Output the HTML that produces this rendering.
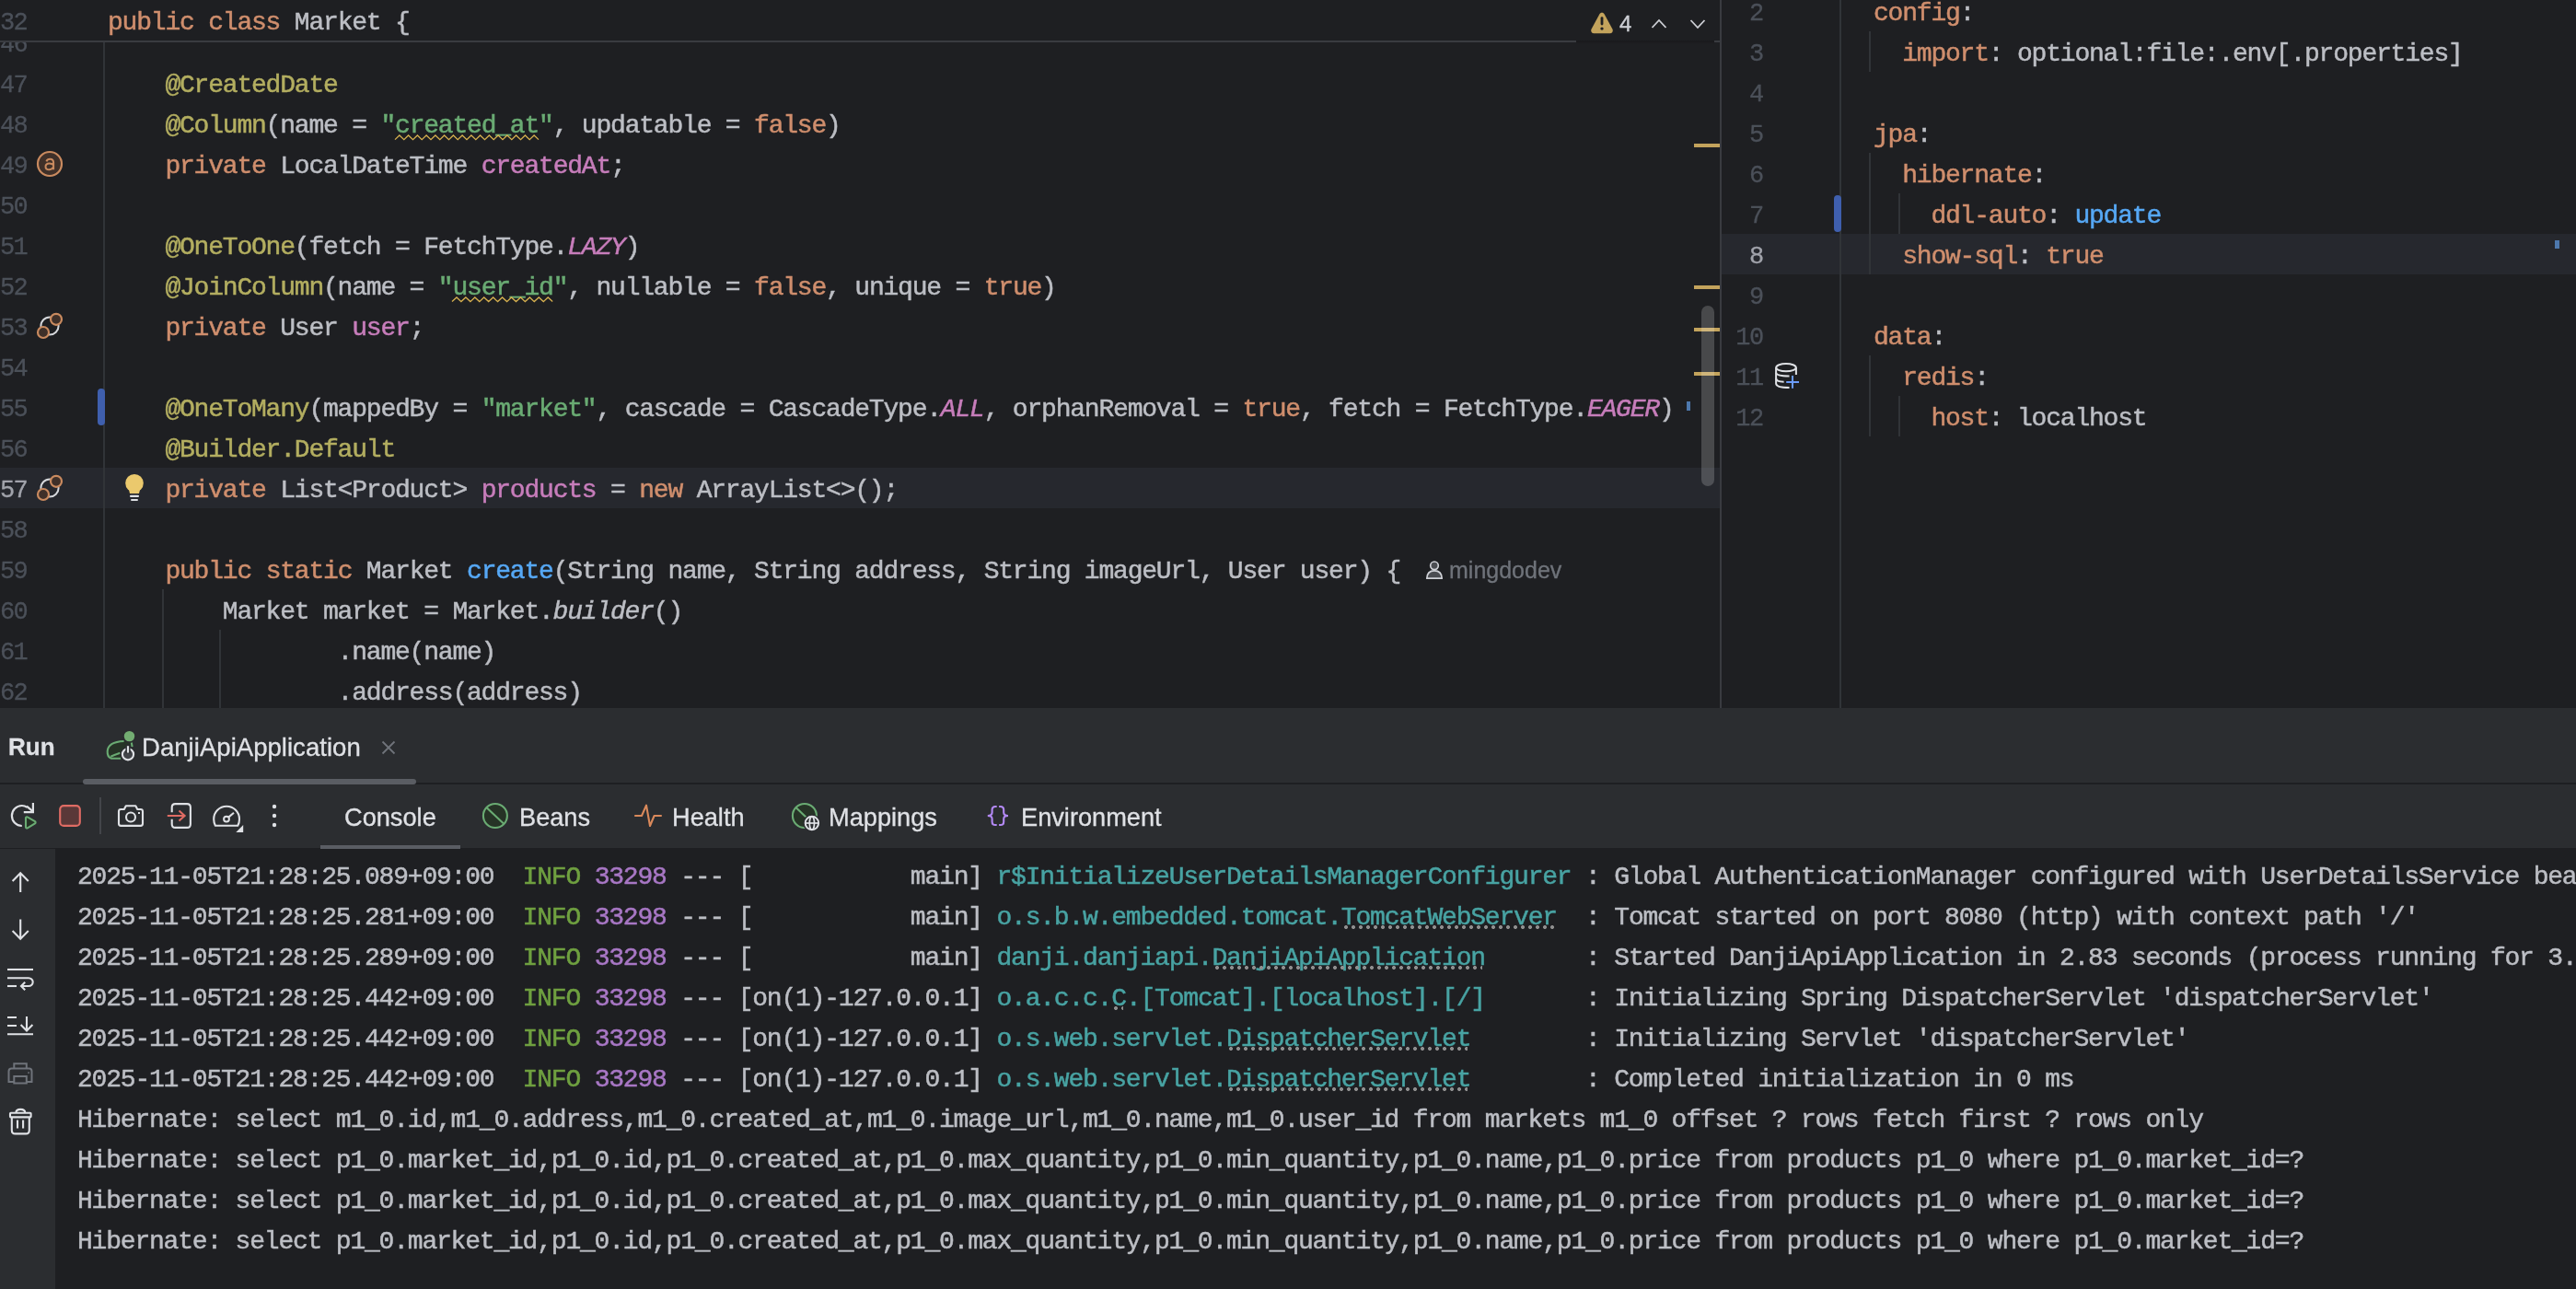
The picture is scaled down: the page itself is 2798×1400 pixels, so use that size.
<!DOCTYPE html><html><head><meta charset="utf-8"><style>
*{margin:0;padding:0;box-sizing:border-box}
html,body{width:2798px;height:1400px;overflow:hidden;background:#1E1F22}
.c,.ln,.ui{will-change:transform}
.a{position:absolute}
.c{position:absolute;white-space:pre;-webkit-text-stroke:0.5px currentColor;font-family:"Liberation Mono",monospace;font-size:28px;letter-spacing:-1.2027px;line-height:44px;height:44px;color:#BCBEC4}
.ln{position:absolute;white-space:pre;-webkit-text-stroke:0.3px currentColor;font-family:"Liberation Mono",monospace;font-size:27px;letter-spacing:-1.6px;line-height:44px;height:44px;color:#4B5059;text-align:right}
.kw{color:#CF8E6D} .an{color:#B3AE60} .st{color:#6AAB73} .fd{color:#C77DBB} .fdi{color:#C77DBB;font-style:italic}
.mt{color:#56A8F5} .it{font-style:italic}
.g{color:#6FA040} .p{color:#A877C5} .t{color:#48A3A3}
.sq{}
.du{}
.ui{position:absolute;white-space:pre;-webkit-text-stroke:0.3px currentColor;font-family:"Liberation Sans",sans-serif;color:#DFE1E5}
</style></head><body>
<div class="a" style="left:0;top:508px;width:1868px;height:44px;background:#26282E"></div>
<div class="a" style="left:112px;top:45px;width:2px;height:724px;background:#313438"></div>
<div class="a" style="left:176px;top:640px;width:2px;height:129px;background:#313438"></div>
<div class="a" style="left:238px;top:684px;width:2px;height:85px;background:#313438"></div>
<div class="a" style="left:106px;top:422px;width:8px;height:40px;border-radius:4px;background:#3F5FAE"></div>
<div class="ln" style="left:0;top:27px;width:28px;color:#4B5059">46</div>
<div class="ln" style="left:0;top:71px;width:28px;color:#4B5059">47</div>
<div class="c" style="left:117px;top:71px">    <span class="an">@CreatedDate</span></div>
<div class="ln" style="left:0;top:115px;width:28px;color:#4B5059">48</div>
<div class="c" style="left:117px;top:115px">    <span class="an">@Column</span>(name = <span class="st">"</span><span class="st sq">created_at</span><span class="st">"</span>, updatable = <span class="kw">false</span>)</div>
<div class="ln" style="left:0;top:159px;width:28px;color:#4B5059">49</div>
<div class="c" style="left:117px;top:159px">    <span class="kw">private</span> LocalDateTime <span class="fd">createdAt</span>;</div>
<div class="ln" style="left:0;top:203px;width:28px;color:#4B5059">50</div>
<div class="ln" style="left:0;top:247px;width:28px;color:#4B5059">51</div>
<div class="c" style="left:117px;top:247px">    <span class="an">@OneToOne</span>(fetch = FetchType.<span class="fdi">LAZY</span>)</div>
<div class="ln" style="left:0;top:291px;width:28px;color:#4B5059">52</div>
<div class="c" style="left:117px;top:291px">    <span class="an">@JoinColumn</span>(name = <span class="st">"</span><span class="st sq">user_id</span><span class="st">"</span>, nullable = <span class="kw">false</span>, unique = <span class="kw">true</span>)</div>
<div class="ln" style="left:0;top:335px;width:28px;color:#4B5059">53</div>
<div class="c" style="left:117px;top:335px">    <span class="kw">private</span> User <span class="fd">user</span>;</div>
<div class="ln" style="left:0;top:379px;width:28px;color:#4B5059">54</div>
<div class="ln" style="left:0;top:423px;width:28px;color:#4B5059">55</div>
<div class="c" style="left:117px;top:423px">    <span class="an">@OneToMany</span>(mappedBy = <span class="st">"market"</span>, cascade = CascadeType.<span class="fdi">ALL</span>, orphanRemoval = <span class="kw">true</span>, fetch = FetchType.<span class="fdi">EAGER</span>)</div>
<div class="ln" style="left:0;top:467px;width:28px;color:#4B5059">56</div>
<div class="c" style="left:117px;top:467px">    <span class="an">@Builder.Default</span></div>
<div class="ln" style="left:0;top:511px;width:28px;color:#A1A3AB">57</div>
<div class="c" style="left:117px;top:511px">    <span class="kw">private</span> List&lt;Product&gt; <span class="fd">products</span> = <span class="kw">new</span> ArrayList&lt;&gt;();</div>
<div class="ln" style="left:0;top:555px;width:28px;color:#4B5059">58</div>
<div class="ln" style="left:0;top:599px;width:28px;color:#4B5059">59</div>
<div class="c" style="left:117px;top:599px">    <span class="kw">public</span> <span class="kw">static</span> Market <span class="mt">create</span>(String name, String address, String imageUrl, User user) {</div>
<div class="ln" style="left:0;top:643px;width:28px;color:#4B5059">60</div>
<div class="c" style="left:117px;top:643px">        Market market = Market.<span class="it">builder</span>()</div>
<div class="ln" style="left:0;top:687px;width:28px;color:#4B5059">61</div>
<div class="c" style="left:117px;top:687px">                .name(name)</div>
<div class="ln" style="left:0;top:731px;width:28px;color:#4B5059">62</div>
<div class="c" style="left:117px;top:731px">                .address(address)</div>
<div class="a" style="left:0;top:0;width:1868px;height:45px;background:#1E1F22"></div>
<div class="ln" style="left:0;top:3px;width:28px">32</div>
<div class="c" style="left:117px;top:3px"><span class="kw">public</span> <span class="kw">class</span> Market {</div>
<div class="a" style="left:0;top:44px;width:1712px;height:2px;background:#393B40"></div>
<div class="a" style="left:1862px;top:44px;width:6px;height:2px;background:#393B40"></div>
<div class="a" style="left:1868px;top:0;width:2px;height:769px;background:#393B40"></div>
<div class="a" style="left:1870px;top:254px;width:928px;height:44px;background:#26282E"></div>
<div class="a" style="left:1998px;top:0;width:2px;height:769px;background:#313438"></div>
<div class="a" style="left:2030px;top:34px;width:2px;height:44px;background:#313438"></div>
<div class="a" style="left:2030px;top:166px;width:2px;height:132px;background:#313438"></div>
<div class="a" style="left:2030px;top:386px;width:2px;height:88px;background:#313438"></div>
<div class="a" style="left:2062px;top:210px;width:2px;height:44px;background:#313438"></div>
<div class="a" style="left:2062px;top:430px;width:2px;height:44px;background:#313438"></div>
<div class="a" style="left:1992px;top:212px;width:8px;height:40px;border-radius:4px;background:#3F5FAE"></div>
<div class="ln" style="left:1870px;top:-7px;width:44.5px;color:#4B5059">2</div>
<div class="c" style="left:2035px;top:-7px"><span class="kw">config</span>:</div>
<div class="ln" style="left:1870px;top:37px;width:44.5px;color:#4B5059">3</div>
<div class="c" style="left:2035px;top:37px">  <span class="kw">import</span>: optional:file:.env[.properties]</div>
<div class="ln" style="left:1870px;top:81px;width:44.5px;color:#4B5059">4</div>
<div class="ln" style="left:1870px;top:125px;width:44.5px;color:#4B5059">5</div>
<div class="c" style="left:2035px;top:125px"><span class="kw">jpa</span>:</div>
<div class="ln" style="left:1870px;top:169px;width:44.5px;color:#4B5059">6</div>
<div class="c" style="left:2035px;top:169px">  <span class="kw">hibernate</span>:</div>
<div class="ln" style="left:1870px;top:213px;width:44.5px;color:#4B5059">7</div>
<div class="c" style="left:2035px;top:213px">    <span class="kw">ddl-auto</span>: <span class="mt">update</span></div>
<div class="ln" style="left:1870px;top:257px;width:44.5px;color:#A1A3AB">8</div>
<div class="c" style="left:2035px;top:257px">  <span class="kw">show-sql</span>: <span class="kw">true</span></div>
<div class="ln" style="left:1870px;top:301px;width:44.5px;color:#4B5059">9</div>
<div class="ln" style="left:1870px;top:345px;width:44.5px;color:#4B5059">10</div>
<div class="c" style="left:2035px;top:345px"><span class="kw">data</span>:</div>
<div class="ln" style="left:1870px;top:389px;width:44.5px;color:#4B5059">11</div>
<div class="c" style="left:2035px;top:389px">  <span class="kw">redis</span>:</div>
<div class="ln" style="left:1870px;top:433px;width:44.5px;color:#4B5059">12</div>
<div class="c" style="left:2035px;top:433px">    <span class="kw">host</span>: localhost</div>
<div class="a" style="left:0;top:769px;width:2798px;height:152px;background:#2B2D30"></div>
<div class="a" style="left:0;top:850px;width:2798px;height:2px;background:#1E1F22"></div>
<div class="ui" style="left:8.5px;top:797px;font-size:26px;font-weight:bold;line-height:28px">Run</div>
<div class="ui" style="left:153.5px;top:797.5px;font-size:27.6px;line-height:28px">DanjiApiApplication</div>
<div class="a" style="left:90px;top:846px;width:362px;height:6px;border-radius:3px;background:#5A5D63"></div>
<div class="ui" style="left:374px;top:873.5px;font-size:27.2px;line-height:28px">Console</div>
<div class="ui" style="left:563.5px;top:873.5px;font-size:27.2px;line-height:28px">Beans</div>
<div class="ui" style="left:729.5px;top:873.5px;font-size:27.2px;line-height:28px">Health</div>
<div class="ui" style="left:899.5px;top:873.5px;font-size:27.2px;line-height:28px">Mappings</div>
<div class="ui" style="left:1109px;top:873.5px;font-size:27.2px;line-height:28px">Environment</div>
<div class="a" style="left:348px;top:918px;width:152px;height:4px;background:#5A5D63"></div>
<div class="a" style="left:0;top:922px;width:60px;height:478px;background:#2B2D30"></div>
<div class="c" style="left:83.5px;top:931px">2025-11-05T21:28:25.089+09:00  <span class="g">INFO</span> <span class="p">33298</span> --- [           main] <span class="t">r$InitializeUserDetailsManagerConfigurer</span> : Global AuthenticationManager configured with UserDetailsService bean</div>
<div class="c" style="left:83.5px;top:975px">2025-11-05T21:28:25.281+09:00  <span class="g">INFO</span> <span class="p">33298</span> --- [           main] <span class="t">o.s.b.w.embedded.tomcat.</span><span class="t du">TomcatWebServer</span>  : Tomcat started on port 8080 (http) with context path '/'</div>
<div class="c" style="left:83.5px;top:1019px">2025-11-05T21:28:25.289+09:00  <span class="g">INFO</span> <span class="p">33298</span> --- [           main] <span class="t">danji.danjiapi.</span><span class="t du">DanjiApiApplication</span>       : Started DanjiApiApplication in 2.83 seconds (process running for 3.1)</div>
<div class="c" style="left:83.5px;top:1063px">2025-11-05T21:28:25.442+09:00  <span class="g">INFO</span> <span class="p">33298</span> --- [on(1)-127.0.0.1] <span class="t">o.a.c.c.</span><span class="t du">C</span><span class="t">.[Tomcat].[localhost].[/]</span>       : Initializing Spring DispatcherServlet 'dispatcherServlet'</div>
<div class="c" style="left:83.5px;top:1107px">2025-11-05T21:28:25.442+09:00  <span class="g">INFO</span> <span class="p">33298</span> --- [on(1)-127.0.0.1] <span class="t">o.s.web.servlet.</span><span class="t du">DispatcherServlet</span>        : Initializing Servlet 'dispatcherServlet'</div>
<div class="c" style="left:83.5px;top:1151px">2025-11-05T21:28:25.442+09:00  <span class="g">INFO</span> <span class="p">33298</span> --- [on(1)-127.0.0.1] <span class="t">o.s.web.servlet.</span><span class="t du">DispatcherServlet</span>        : Completed initialization in 0 ms</div>
<div class="c" style="left:83.5px;top:1195px">Hibernate: select m1_0.id,m1_0.address,m1_0.created_at,m1_0.image_url,m1_0.name,m1_0.user_id from markets m1_0 offset ? rows fetch first ? rows only</div>
<div class="c" style="left:83.5px;top:1239px">Hibernate: select p1_0.market_id,p1_0.id,p1_0.created_at,p1_0.max_quantity,p1_0.min_quantity,p1_0.name,p1_0.price from products p1_0 where p1_0.market_id=?</div>
<div class="c" style="left:83.5px;top:1283px">Hibernate: select p1_0.market_id,p1_0.id,p1_0.created_at,p1_0.max_quantity,p1_0.min_quantity,p1_0.name,p1_0.price from products p1_0 where p1_0.market_id=?</div>
<div class="c" style="left:83.5px;top:1327px">Hibernate: select p1_0.market_id,p1_0.id,p1_0.created_at,p1_0.max_quantity,p1_0.min_quantity,p1_0.name,p1_0.price from products p1_0 where p1_0.market_id=?</div>
<div class="a" style="left:1712px;top:44px;width:150px;height:4px;background:linear-gradient(#19191c,#1E1F22)"></div>
<svg class="a" style="left:1726px;top:12px" width="28" height="26" viewBox="1726 12 28 26"><path d="M1740 13.8 C1741.3 13.8 1742 14.4 1742.7 15.6 L1751.4 31.6 C1752.4 33.6 1751.4 36.2 1749 36.2 L1731 36.2 C1728.6 36.2 1727.6 33.6 1728.6 31.6 L1737.3 15.6 C1738 14.4 1738.7 13.8 1740 13.8 Z" fill="#C3A35C"/><rect x="1738.6" y="18.2" width="2.8" height="9.2" rx="1.4" fill="#1E1F22"/><circle cx="1740" cy="31.1" r="1.7" fill="#1E1F22"/></svg>
<div class="ui" style="left:1758.5px;top:14.3px;font-size:24px;line-height:24px;color:#CED0D6">4</div>
<svg class="a" style="left:1790px;top:16px" width="66" height="20" viewBox="1790 16 66 20"><path d="M1794.5 30 L1802 22 L1809.5 30" stroke="#CED0D6" stroke-width="1.8" fill="none"/><path d="M1836.5 22 L1844 30 L1851.5 22" stroke="#CED0D6" stroke-width="1.8" fill="none"/></svg>
<div class="a" style="left:1840px;top:156px;width:28px;height:4px;background:#C3A35C"></div>
<div class="a" style="left:1840px;top:310px;width:28px;height:4px;background:#C3A35C"></div>
<div class="a" style="left:1840px;top:356px;width:28px;height:4px;background:#C3A35C"></div>
<div class="a" style="left:1840px;top:404px;width:28px;height:4px;background:#C3A35C"></div>
<div class="a" style="left:1832px;top:436px;width:4px;height:10px;background:#4D78AD"></div>
<div class="a" style="left:1848px;top:332px;width:14px;height:196px;border-radius:7px;background:rgba(255,255,255,0.19)"></div>
<div class="a" style="left:2775px;top:261px;width:5px;height:9px;background:#4D78AD"></div>
<svg class="a" style="left:36px;top:160px" width="36" height="36" viewBox="36 160 36 36"><circle cx="54" cy="178" r="13" fill="#3F3029" stroke="#C98A5F" stroke-width="2.2"/><path d="M50.4 175.3 C51.1 173.4 52.6 172.7 54.3 172.7 C56.8 172.7 58.1 174.1 58.1 176.6 V184.3 M58.1 179.4 C57.1 177.9 55.6 177.4 53.7 177.4 C51.1 177.4 49.5 178.8 49.5 180.9 C49.5 183 51.1 184.2 53.5 184.2 C55.9 184.2 57.6 182.9 58.1 181.1" fill="none" stroke="#C98A5F" stroke-width="2"/></svg>
<svg class="a" style="left:36px;top:334px" width="36" height="40" viewBox="36 334 36 40"><circle cx="54" cy="354" r="9.6" fill="none" stroke="#D5D7DB" stroke-width="2"/><circle cx="61" cy="346.8" r="6" fill="#3F3029" stroke="#C98A5F" stroke-width="2.2"/><circle cx="47" cy="361" r="6" fill="#3F3029" stroke="#C98A5F" stroke-width="2.2"/></svg>
<svg class="a" style="left:36px;top:510px" width="36" height="40" viewBox="36 510 36 40"><circle cx="54" cy="530" r="9.6" fill="none" stroke="#D5D7DB" stroke-width="2"/><circle cx="61" cy="522.8" r="6" fill="#3F3029" stroke="#C98A5F" stroke-width="2.2"/><circle cx="47" cy="537" r="6" fill="#3F3029" stroke="#C98A5F" stroke-width="2.2"/></svg>
<svg class="a" style="left:126px;top:508px" width="40" height="44" viewBox="126 508 40 44"><circle cx="146" cy="524.7" r="9.8" fill="#EBC96D"/><path d="M139.2 529 L141 536 L151 536 L152.8 529 Z" fill="#EBC96D"/><rect x="141" y="537.8" width="10" height="2.2" rx="1" fill="#DFE1E5"/><rect x="142" y="541.9" width="8" height="2.2" rx="1.1" fill="#DFE1E5"/></svg>
<svg class="a" style="left:1546px;top:606px" width="24" height="26" viewBox="1546 606 24 26"><circle cx="1558" cy="614.3" r="4.3" fill="#4B4D52" stroke="#CED0D6" stroke-width="1.7"/><path d="M1549.8 628.2 C1550 622.5 1553.5 619.8 1558 619.8 C1562.5 619.8 1566 622.5 1566.2 628.2 Z" fill="#4B4D52" stroke="#CED0D6" stroke-width="1.7" stroke-linejoin="round"/></svg>
<div class="ui" style="left:1574px;top:604px;font-size:25px;line-height:30px;color:#6F737A">mingdodev</div>
<svg class="a" style="left:1920px;top:386px" width="40" height="42" viewBox="1920 386 40 42"><g fill="none" stroke="#DFE1E5" stroke-width="2"><ellipse cx="1940" cy="399.2" rx="10.8" ry="4.1"/><path d="M1929.1 399.2 V416.5 C1929.1 419.5 1934 421 1943.5 421"/><path d="M1950.9 399.2 V407"/><path d="M1929.1 404.8 C1929.1 407.2 1934 408.5 1943.5 408.5"/><path d="M1929.1 410.8 C1929.1 413.2 1932 414.7 1937.6 414.7"/></g><path d="M1947 394.5 V0" stroke="none"/><g stroke="#6B9BFA" stroke-width="2"><path d="M1940.2 415 H1954"/><path d="M1947 408.1 V421.8"/></g></svg>
<svg class="a" style="left:110px;top:788px" width="40" height="42" viewBox="110 788 40 42"><path d="M134.6 805 C126 805.4 117.2 808 116.7 815.8 C116.4 820.5 118.6 823 121 823.8 L132 823.8 L133 815 L137.5 810.5 L143.5 808.5 L143 805.5 Z" fill="#263326"/><path d="M134.6 805 C126 805.4 117.2 808 116.7 815.8 C116.4 820.5 118.6 823 121 823.8 L131.2 823.8" fill="none" stroke="#6AAB73" stroke-width="2.1"/><path d="M120.3 821.8 C123.5 820.3 127 819 130.5 817.8" stroke="#6AAB73" stroke-width="2.1" fill="none"/><path d="M142.8 806.3 L143.6 811.2" stroke="#6AAB73" stroke-width="2.1"/><circle cx="140.5" cy="799.6" r="7.3" fill="#2B2D30"/><circle cx="140.5" cy="799.6" r="5.7" fill="#73AD72"/><circle cx="139" cy="819.3" r="8.6" fill="#2B2D30"/><circle cx="139" cy="819.3" r="6.1" fill="#43454A" stroke="#DFE1E5" stroke-width="2.1"/><path d="M139 808.5 V818.2" stroke="#2B2D30" stroke-width="5.2"/><path d="M139 810.2 V817.6" stroke="#DFE1E5" stroke-width="2.2"/></svg>
<svg class="a" style="left:410px;top:800px" width="24" height="24" viewBox="410 800 24 24"><path d="M415.5 805.5 L428.5 818.5 M428.5 805.5 L415.5 818.5" stroke="#6F737A" stroke-width="1.8"/></svg>
<svg class="a" style="left:5px;top:862px" width="90" height="48" viewBox="5 862 90 48"><path d="M29.5 876.8 C27.8 875.6 25.8 875 23.8 875 C17.7 875 12.9 880 12.9 886 C12.9 892 17.7 897 23.8 897" fill="none" stroke="#DFE1E5" stroke-width="2.2"/><path d="M35.9 872 V882.1 H25.8" fill="none" stroke="#DFE1E5" stroke-width="2.2"/><path d="M35.2 880.8 L29 875.6" stroke="#DFE1E5" stroke-width="2.2"/><path d="M28 888.3 C28 887.4 29 886.9 29.8 887.4 L38 892.2 C38.8 892.7 38.8 893.9 38 894.4 L29.8 899.3 C29 899.8 28 899.2 28 898.3 Z" fill="#253325" stroke="#6AAB73" stroke-width="2.1" stroke-linejoin="round"/><rect x="65.2" y="875.1" width="21.6" height="21.8" rx="4" fill="#5A3838" stroke="#E06C64" stroke-width="2.1"/></svg>
<div class="a" style="left:108px;top:866px;width:2px;height:40px;background:#43454A"></div>
<svg class="a" style="left:120px;top:862px" width="90" height="48" viewBox="120 862 90 48"><path d="M131.3 879 H134.8 L136.8 875.2 H147.3 L149.3 879 H152.7 C154 879 155 880 155 881.3 V894.6 C155 895.9 154 896.9 152.7 896.9 H131.3 C130 896.9 129 895.9 129 894.6 V881.3 C129 880 130 879 131.3 879 Z" fill="none" stroke="#DFE1E5" stroke-width="2.1" stroke-linejoin="round"/><circle cx="142" cy="887.5" r="5" fill="none" stroke="#DFE1E5" stroke-width="2.1"/><rect x="150" y="882" width="2" height="2" fill="#DFE1E5"/><path d="M186.7 882.2 V877 C186.7 874.8 188.2 873.1 190.4 873.1 H203.2 C205.4 873.1 206.9 874.8 206.9 877 V895 C206.9 897.2 205.4 898.9 203.2 898.9 H190.4 C188.2 898.9 186.7 897.2 186.7 895 V889.7" fill="none" stroke="#DFE1E5" stroke-width="2.1"/><path d="M181.8 886 H200.5 M194.5 880.4 L200.6 886 L194.5 891.6" fill="none" stroke="#E06C64" stroke-width="2.1"/></svg>
<svg class="a" style="left:225px;top:865px" width="80" height="45" viewBox="225 865 80 45"><path d="M233.9 896.8 C232.7 894.6 232.2 892.2 232.2 889.7 C232.2 882 238.4 875.8 246.1 875.8 C253.8 875.8 260 882 260 889.7 C260 892.2 259.5 894.6 258.3 896.8 Z" fill="none" stroke="#DFE1E5" stroke-width="2.1" stroke-linejoin="round"/><circle cx="246" cy="889.6" r="2.9" fill="none" stroke="#DFE1E5" stroke-width="2"/><path d="M248.2 887.6 L254 882.8" stroke="#DFE1E5" stroke-width="2.1"/><path d="M256.3 904 L264.2 896 V904 Z" fill="#DFE1E5"/><circle cx="298" cy="876" r="2.2" fill="#DFE1E5"/><circle cx="298" cy="886" r="2.2" fill="#DFE1E5"/><circle cx="298" cy="896" r="2.2" fill="#DFE1E5"/></svg>
<svg class="a" style="left:515px;top:865px" width="45" height="45" viewBox="515 865 45 45"><ellipse cx="537.9" cy="886" rx="13" ry="13" fill="#263326" stroke="#6AAB73" stroke-width="2.1"/><path d="M528.6 877.3 L547 894.5" stroke="#6AAB73" stroke-width="2.1"/></svg>
<svg class="a" style="left:680px;top:865px" width="45" height="45" viewBox="680 865 45 45"><path d="M690 886 H697 L702 874.6 L706 897 L710.6 886 H718" fill="none" stroke="#D9895B" stroke-width="2.1" stroke-linejoin="round" stroke-linecap="round"/></svg>
<svg class="a" style="left:855px;top:865px" width="45" height="45" viewBox="855 865 45 45"><circle cx="873.9" cy="886" r="13" fill="#263326" stroke="#6AAB73" stroke-width="2.1"/><path d="M864.7 877.2 L876 888" stroke="#6AAB73" stroke-width="2.1"/><circle cx="881.9" cy="894" r="9.6" fill="#2B2D30"/><circle cx="881.9" cy="894" r="7.2" fill="none" stroke="#DFE1E5" stroke-width="2"/><ellipse cx="881.9" cy="894" rx="2.6" ry="7.2" fill="none" stroke="#DFE1E5" stroke-width="1.7"/><path d="M874.7 894 H889.1" stroke="#DFE1E5" stroke-width="1.7"/></svg>
<svg class="a" style="left:1060px;top:865px" width="45" height="45" viewBox="1060 865 45 45"><path d="M1082.7 876 H1081.2 C1078.8 876 1077.6 877.3 1077.6 879.6 V882.6 C1077.6 884.8 1076.1 886 1072.8 886 C1076.1 886 1077.6 887.2 1077.6 889.4 V892.4 C1077.6 894.7 1078.8 896 1081.2 896 H1082.7 M1085.1 876 H1086.6 C1089 876 1090.2 877.3 1090.2 879.6 V882.6 C1090.2 884.8 1091.7 886 1095 886 C1091.7 886 1090.2 887.2 1090.2 889.4 V892.4 C1090.2 894.7 1089 896 1086.6 896 H1085.1" fill="none" stroke="#B389F5" stroke-width="2.1"/></svg>
<svg class="a" style="left:0px;top:940px" width="45" height="300" viewBox="0 940 45 300"><g fill="none" stroke="#DFE1E5" stroke-width="2.1"><path d="M22.2 948.5 V969 M13.6 957 L22.2 948.3 L30.8 957"/><path d="M22.2 998.5 V1019.5 M13.6 1011 L22.2 1019.7 L30.8 1011"/><path d="M8 1053 H36"/><path d="M8 1062.2 H31 C33.6 1062.2 35.7 1064.3 35.7 1066.6 C35.7 1069 33.6 1071 31 1071 H23"/><path d="M27.2 1066.8 L23 1071 L27.2 1075.2"/><path d="M8 1071 H18"/><path d="M8 1105 H18 M8 1114 H18 M8 1123.2 H36"/><path d="M29 1104 V1119 M22.6 1113 L29 1119.4 L35.4 1113"/></g><g fill="none" stroke="#6F737A" stroke-width="2"><path d="M15.3 1160.3 V1155.2 H28.8 V1160.3"/><path d="M15.3 1175 H9.5 V1163.5 C9.5 1161.6 10.8 1160.6 12.5 1160.6 H31.5 C33.2 1160.6 34.5 1161.6 34.5 1163.5 V1175 H28.8"/><rect x="15.3" y="1169" width="13.5" height="7.5"/></g><rect x="30.3" y="1164.3" width="1.6" height="1.6" fill="#6F737A"/><g fill="none" stroke="#DFE1E5" stroke-width="2.1"><path d="M17.4 1208.5 C17.4 1206 19.6 1204.9 22.3 1204.9 C25 1204.9 27.2 1206 27.2 1208.5"/><rect x="11" y="1208.8" width="22.6" height="4.6" rx="0.8"/><path d="M12.8 1213.5 V1227.5 C12.8 1230 14.4 1231.4 16.6 1231.4 H28 C30.2 1231.4 31.8 1230 31.8 1227.5 V1213.5"/><path d="M19 1216.5 V1225.5 M25.1 1216.5 V1225.5"/></g></svg>
<svg class="a" style="left:427.0px;top:145px" width="160.0" height="10" viewBox="427.0 145 160.0 10"><polyline points="429.0,151.6 433.9,147.0 438.8,151.6 443.6,147.0 448.5,151.6 453.4,147.0 458.2,151.6 463.1,147.0 468.0,151.6 472.9,147.0 477.8,151.6 482.6,147.0 487.5,151.6 492.4,147.0 497.2,151.6 502.1,147.0 507.0,151.6 511.9,147.0 516.8,151.6 521.6,147.0 526.5,151.6 531.4,147.0 536.2,151.6 541.1,147.0 546.0,151.6 550.9,147.0 555.8,151.6 560.6,147.0 565.5,151.6 570.4,147.0 575.2,151.6 580.1,147.0 585.0,151.6" fill="none" stroke="#D6B04F" stroke-width="1.3"/></svg>
<svg class="a" style="left:489.4px;top:321px" width="113.19999999999993" height="10" viewBox="489.4 321 113.19999999999993 10"><polyline points="491.4,327.6 496.4,323.0 501.3,327.6 506.3,323.0 511.3,327.6 516.2,323.0 521.2,327.6 526.1,323.0 531.1,327.6 536.1,323.0 541.0,327.6 546.0,323.0 551.0,327.6 555.9,323.0 560.9,327.6 565.9,323.0 570.8,327.6 575.8,323.0 580.7,327.6 585.7,323.0 590.7,327.6 595.6,323.0 600.6,327.6" fill="none" stroke="#D6B04F" stroke-width="1.3"/></svg>
<div class="a" style="left:1460.0px;top:1005px;width:228.0px;height:4px;background:radial-gradient(circle at 2px 2px,#8E8E8E 1.7px,rgba(142,142,142,0) 2.3px) 0 0/8px 4px repeat-x"></div>
<div class="a" style="left:1319.6px;top:1049px;width:290.4px;height:4px;background:radial-gradient(circle at 2px 2px,#8E8E8E 1.7px,rgba(142,142,142,0) 2.3px) 0 0/8px 4px repeat-x"></div>
<div class="a" style="left:1210.4px;top:1093px;width:9.6px;height:4px;background:radial-gradient(circle at 2px 2px,#8E8E8E 1.7px,rgba(142,142,142,0) 2.3px) 0 0/8px 4px repeat-x"></div>
<div class="a" style="left:1335.2px;top:1137px;width:259.2px;height:4px;background:radial-gradient(circle at 2px 2px,#8E8E8E 1.7px,rgba(142,142,142,0) 2.3px) 0 0/8px 4px repeat-x"></div>
<div class="a" style="left:1335.2px;top:1181px;width:259.2px;height:4px;background:radial-gradient(circle at 2px 2px,#8E8E8E 1.7px,rgba(142,142,142,0) 2.3px) 0 0/8px 4px repeat-x"></div>
</body></html>
